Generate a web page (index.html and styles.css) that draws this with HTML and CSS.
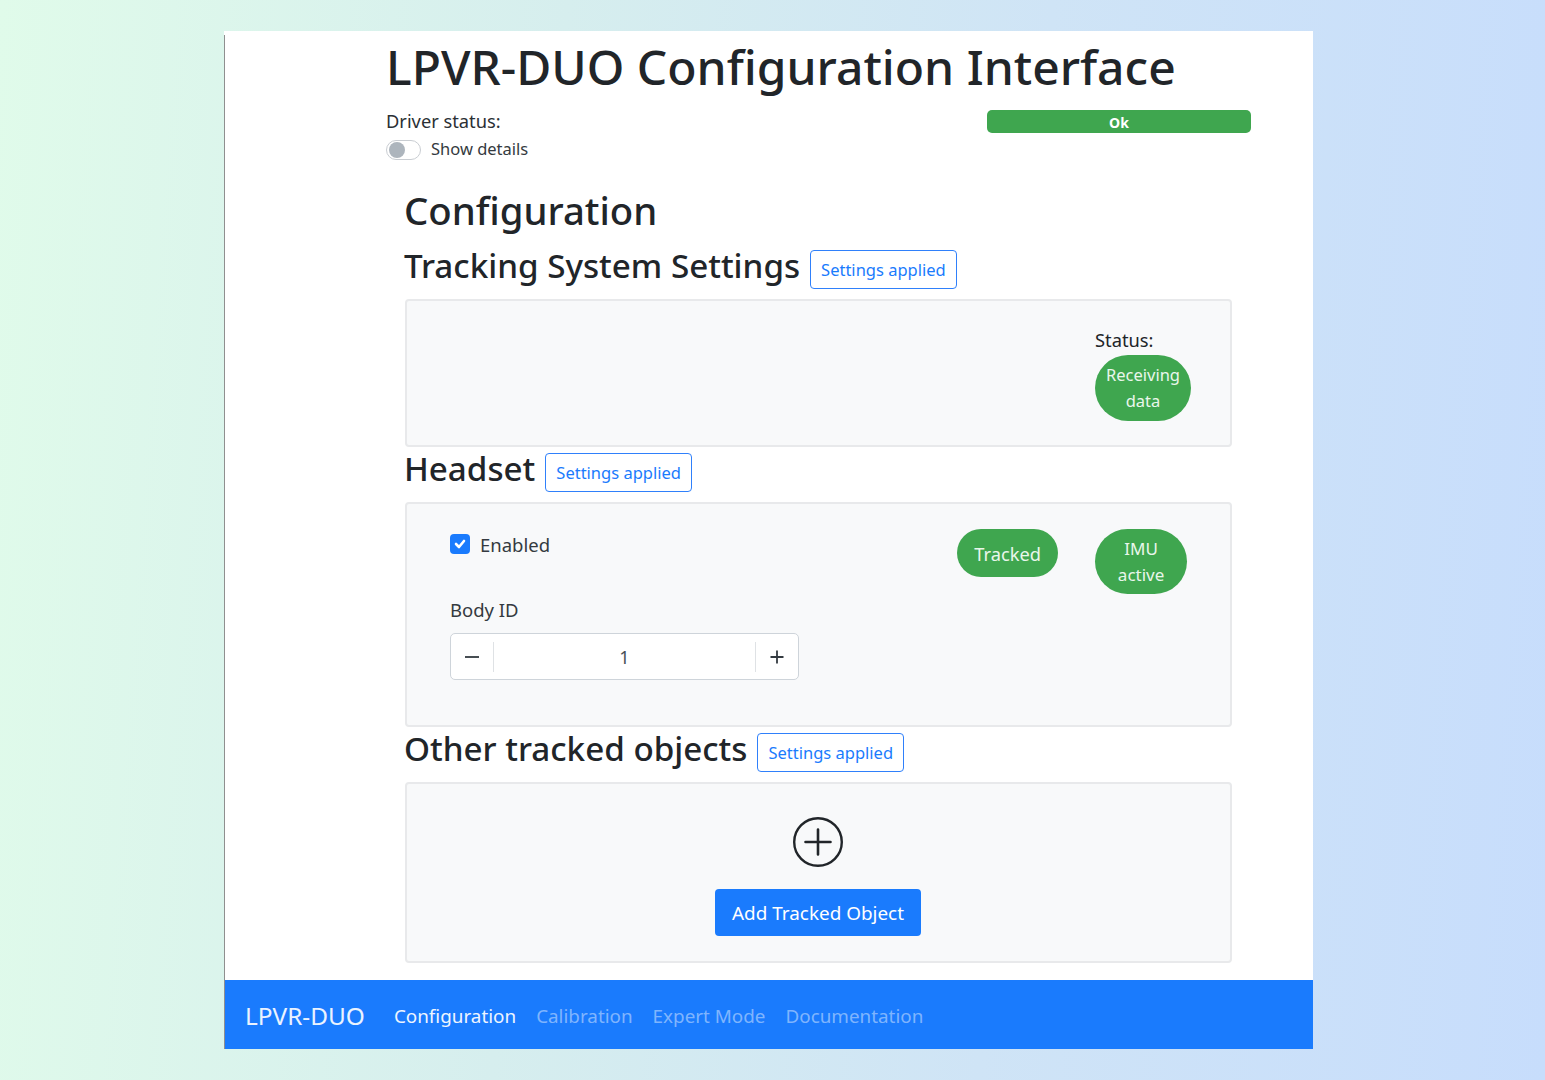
FILE: index.html
```html
<!DOCTYPE html>
<html lang="en">
<head>
<meta charset="utf-8">
<title>LPVR-DUO Configuration Interface</title>
<link rel="stylesheet" href="styles.css">
</head>
<body>
<div class="frame">
  <main class="content">
    <h1 class="title">LPVR-DUO Configuration Interface</h1>
    <div class="driver-row">
      <span class="driver-label">Driver status:</span>
      <div class="ok-bar">Ok</div>
    </div>
    <div class="details-row">
      <span class="switch"><span class="knob"></span></span>
      <span class="details-text">Show details</span>
    </div>
    <section class="config">
      <h2 class="config-title">Configuration</h2>

      <div class="section-head head-tracking">
        <h3>Tracking System Settings</h3>
        <span class="applied">Settings applied</span>
      </div>
      <div class="panel panel-tracking">
        <div class="status-col">
          <div class="status-label">Status:</div>
          <div class="pill pill-receiving">Receiving<br>data</div>
        </div>
      </div>

      <div class="section-head">
        <h3>Headset</h3>
        <span class="applied">Settings applied</span>
      </div>
      <div class="panel panel-headset">
        <div class="headset-left">
          <div class="enabled-row">
            <span class="checkbox">
              <svg viewBox="0 0 20 20" width="20" height="20"><path d="M6 10l3 3 5-6" fill="none" stroke="#fff" stroke-width="2.6" stroke-linecap="round" stroke-linejoin="round"/></svg>
            </span>
            <span class="enabled-text">Enabled</span>
          </div>
          <div class="body-label">Body ID</div>
          <div class="stepper">
            <span class="step-btn">
              <svg viewBox="0 0 16 16" width="16" height="16"><path d="M1 8h14" stroke="#333a40" stroke-width="1.8"/></svg>
            </span>
            <span class="step-value">1</span>
            <span class="step-btn">
              <svg viewBox="0 0 16 16" width="16" height="16"><path d="M1.500 8h13M8 1.500v13" stroke="#333a40" stroke-width="1.8"/></svg>
            </span>
          </div>
        </div>
        <div class="pill pill-tracked">Tracked</div>
        <div class="pill pill-imu">IMU<br>active</div>
      </div>

      <div class="section-head">
        <h3>Other tracked objects</h3>
        <span class="applied">Settings applied</span>
      </div>
      <div class="panel panel-objects">
        <svg class="add-icon" viewBox="0 0 50 50" width="50" height="50">
          <circle cx="25" cy="25" r="23.800" fill="none" stroke="#212529" stroke-width="2.400"/>
          <path d="M12.500 25h25M25 12.500v25" stroke="#212529" stroke-width="2.600" stroke-linecap="round"/>
        </svg>
        <button class="add-btn" type="button">Add Tracked Object</button>
      </div>
    </section>
  </main>
  <nav class="navbar">
    <span class="brand">LPVR-DUO</span>
    <span class="nav-link active">Configuration</span>
    <span class="nav-link">Calibration</span>
    <span class="nav-link">Expert Mode</span>
    <span class="nav-link">Documentation</span>
  </nav>
</div>
</body>
</html>
```

FILE: styles.css
```css
* { box-sizing: border-box; }
html, body { height: 100%; }
body {
  margin: 0;
  height: 1080px;
  overflow: hidden;
  padding-top: 31px;
  background: linear-gradient(94deg, #e0fbea 0%, #d6eeee 35%, #cfe4f6 65%, #c7ddfc 100%);
  font-family: "Noto Sans", "Open Sans", sans-serif;
  color: #212529;
}
.frame {
  width: 1089px;
  height: 1018px;
  margin-left: 224px;
  background: #fff;
  display: flex;
  flex-direction: column;
  position: relative;
}
.frame::before {
  content: "";
  position: absolute;
  left: 0;
  top: 4px;
  bottom: 0;
  width: 1px;
  background: #8f8f8f;
}
.content {
  flex: 1;
  padding: 0 62px 0 162px;
}
.title {
  margin: 0;
  font-size: 48px;
  font-weight: 500;
  line-height: 72px;
  letter-spacing: 0;
}
.driver-row {
  display: flex;
  justify-content: space-between;
  align-items: flex-start;
  margin-top: 7px;
  height: 30px;
  font-size: 18.300px;
  line-height: 22px;
  color: #2b3035;
}
.ok-bar {
  width: 264px;
  height: 23px;
  border-radius: 5px;
  background: #3fa64f;
  color: #fff;
  font-size: 14px;
  font-weight: 700;
  line-height: 25px;
  text-align: center;
}
.details-row {
  display: flex;
  align-items: center;
  gap: 10px;
  height: 20px;
  font-size: 16.500px;
  color: #343a40;
}
.details-text { margin-top: -4px; }
.switch {
  width: 35px;
  height: 20px;
  border: 1px solid #c9cdd2;
  border-radius: 10px;
  background: #fff;
  display: flex;
  align-items: center;
  padding-left: 2px;
}
.knob {
  width: 16px;
  height: 16px;
  border-radius: 50%;
  background: #adb5bd;
}
.config { padding: 24px 19px 0; }
.config-title {
  margin: 0 0 0 -1px;
  font-size: 38.300px;
  font-weight: 500;
  line-height: 52px;
}
.section-head {
  display: flex;
  align-items: center;
  gap: 10px;
  height: 39px;
  margin: 10px 0;
}
.section-head.head-tracking { margin-top: 14px; }
.section-head h3 {
  margin: 0 0 0 -1px;
  font-size: 33.200px;
  font-weight: 500;
  line-height: 39px;
  position: relative;
  top: -4px;
}
.applied {
  height: 39px;
  padding: 0 10px;
  border: 1px solid #2f80fb;
  border-radius: 4px;
  color: #1a7bfd;
  font-size: 16.500px;
  line-height: 38px;
  white-space: nowrap;
}
.panel {
  width: 827px;
  border: 2px solid #e8e9eb;
  border-radius: 4px;
  background: #f8f9fa;
}
.panel-tracking {
  height: 148px;
  padding: 26px 39px 0 0;
  display: flex;
  justify-content: flex-end;
}
.panel + .section-head { margin-top: 6px; }
.status-col { width: 96px; }
.status-label {
  font-size: 18.300px;
  line-height: 28px;
  height: 28px;
  margin-top: -1px;
}
.pill {
  background: #3fa64f;
  color: #e9f6eb;
  border-radius: 33px;
  font-size: 17.500px;
  line-height: 26px;
  text-align: center;
}
.pill-receiving { width: 96px; height: 66px; padding-top: 7px; font-size: 16.500px; margin-top: 1px; }
.panel-headset {
  height: 225px;
  padding: 24px 43px 0 43px;
  display: flex;
  align-items: flex-start;
}
.headset-left { width: 508px; }
.enabled-row {
  display: flex;
  align-items: center;
  gap: 10px;
  height: 34px;
  font-size: 18.500px;
  color: #343a40;
}
.enabled-text { margin-top: -2px; }
.checkbox {
  width: 20px;
  height: 20px;
  border-radius: 4px;
  background: #1a7bfd;
  display: block;
  margin-top: -2px;
}
.checkbox svg { display: block; }
.body-label {
  margin-top: 35px;
  font-size: 18.500px;
  line-height: 26px;
  color: #343a40;
}
.stepper {
  margin-top: 10px;
  width: 349px;
  height: 47px;
  border: 1px solid #ced4da;
  border-radius: 5px;
  background: #fff;
  display: flex;
  align-items: center;
}
.step-btn {
  width: 43px;
  height: 30px;
  display: flex;
  align-items: center;
  justify-content: center;
}
.step-btn:first-child { border-right: 1px solid #dfe2e5; }
.step-btn:last-child { border-left: 1px solid #dfe2e5; }
.step-value {
  flex: 1;
  text-align: center;
  font-size: 18px;
  color: #495057;
}
.pill-tracked {
  width: 101px;
  height: 48px;
  margin-top: 1px;
  line-height: 49px;
  font-size: 18.300px;
}
.pill-imu {
  width: 92px;
  height: 65px;
  margin: 1px 0 0 37px;
  padding-top: 7px;
  font-size: 17px;
}
.panel-objects {
  height: 181px;
  padding: 33px 1px 0 0;
  display: flex;
  flex-direction: column;
  align-items: center;
}
.add-btn {
  margin-top: 22px;
  width: 206px;
  height: 47px;
  border: 0;
  border-radius: 4px;
  background: #1a7bfd;
  color: #fff;
  font: inherit;
  font-size: 18.900px;
}
.navbar {
  height: 69px;
  background: #1a7bfd;
  display: flex;
  align-items: center;
  padding: 2px 0 0 21px;
  gap: 20px;
  font-size: 18.850px;
}
.brand {
  color: #eaf3ff;
  font-size: 24.400px;
  margin-right: 9px;
}
.nav-link { color: rgba(255, 255, 255, 0.45); }
.nav-link.active { color: #eef5ff; }
```
